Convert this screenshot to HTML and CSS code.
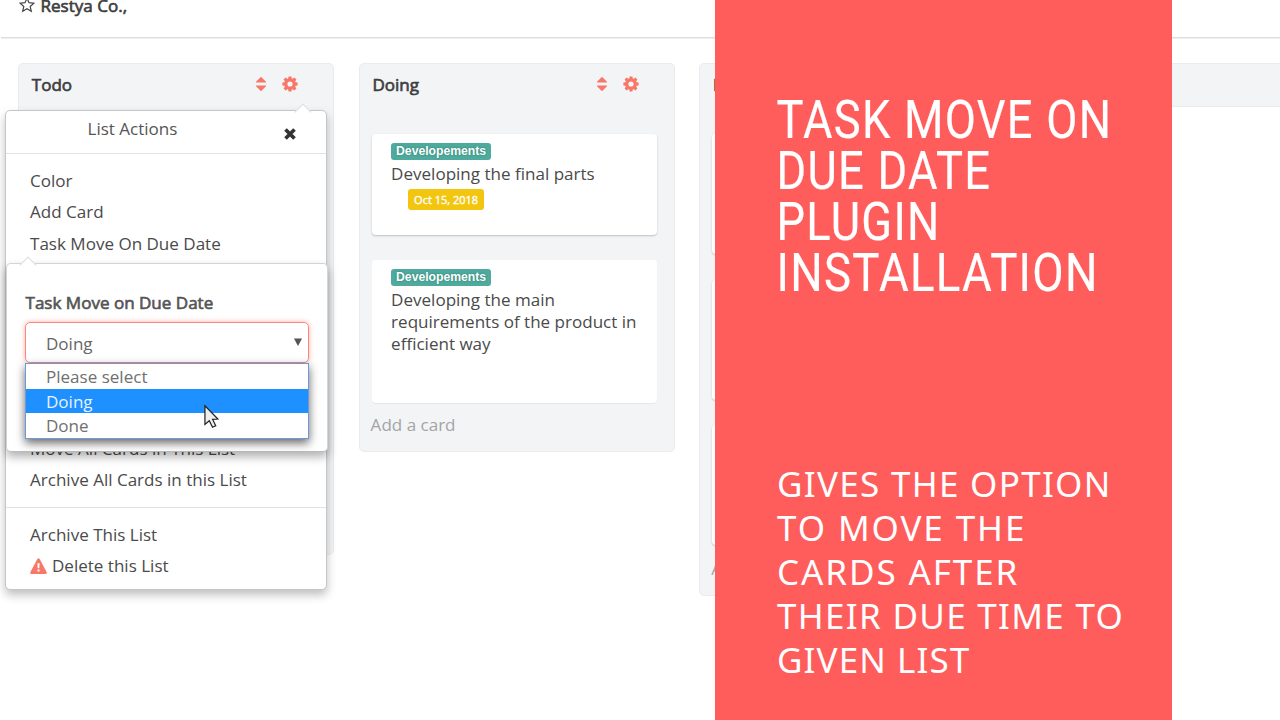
FILE: index.html
```html
<!DOCTYPE html>
<html lang="en">
<head>
<meta charset="utf-8">
<title>Task Move on Due Date</title>
<link rel="stylesheet" href="styles.css">
</head>
<body>
<svg class="defs" width="0" height="0">
  <symbol id="sort" viewBox="0 0 12 16"><path d="M1.400 6.600Q.5 6.500 1 5.700L5.500 1.200Q6 .8 6.500 1.200L11 5.700Q11.500 6.500 10.600 6.600ZM1.400 9.400Q.5 9.500 1 10.300L5.500 14.800Q6 15.200 6.500 14.800L11 10.300Q11.500 9.500 10.600 9.400Z"/></symbol>
  <symbol id="gear" viewBox="0 0 16 16"><path fill-rule="evenodd" d="M6.600.4h2.800l.4 2 .9.400 1.700-1.200 2 2-1.200 1.700.4.900 2 .4v2.800l-2 .4-.4.900 1.200 1.700-2 2-1.700-1.200-.9.400-.4 2H6.600l-.4-2-.9-.4-1.700 1.200-2-2 1.200-1.700-.4-.9-2-.4V6.600l2-.4.4-.9L1.600 3.600l2-2 1.700 1.200.9-.4ZM8 5.400A2.600 2.600 0 1 0 8 10.600A2.600 2.600 0 1 0 8 5.400Z"/></symbol>
</svg>
<main class="screen">
  <header class="org-bar">
    <svg class="star" viewBox="0 0 16 16"><path d="M8 1.200l2 4.500 4.900.5-3.700 3.300 1.100 4.800L8 11.800l-4.300 2.500 1.100-4.800L1.100 6.200l4.900-.5Z"/></svg>
    <span class="org-name">Restya Co.,</span>
  </header>
  <section class="board">
    <article class="list list-todo">
      <div class="list-head"><h2>Todo</h2><svg class="sort"><use href="#sort"/></svg><svg class="gear"><use href="#gear"/></svg></div>
    </article>
    <article class="list list-doing">
      <div class="list-head"><h2>Doing</h2><svg class="sort"><use href="#sort"/></svg><svg class="gear"><use href="#gear"/></svg></div>
      <div class="card card-short"><span class="label">Developements</span><p>Developing the final parts</p><span class="due">Oct 15, 2018</span></div>
      <div class="card card-tall"><span class="label">Developements</span><p>Developing the main<br>requirements of the product in<br>efficient way</p></div>
      <div class="add-card">Add a card</div>
    </article>
    <article class="list list-done">
      <div class="list-head"><h2>Done</h2></div>
      <div class="card"></div><div class="card"></div><div class="card"></div>
      <div class="add-card">Add a card</div>
    </article>
    <div class="list add-list"></div>
  </section>

  <div class="menu">
    <i class="tip"></i>
    <div class="menu-head"><span>List Actions</span>
      <svg class="close" viewBox="0 0 12 12"><path d="M1.500 1.500l9 9M10.500 1.500l-9 9"/></svg></div>
    <ul class="group first"><li>Color</li><li>Add Card</li><li>Task Move On Due Date</li></ul>
    <ul class="group second"><li>Move All Cards in This List</li><li>Archive All Cards in this List</li></ul>
    <ul class="group third"><li>Archive This List</li><li class="delete"><svg class="warn" viewBox="0 0 17 16"><path d="M7.500.8Q8.500-.4 9.500.8L16.700 14.200Q17 15.800 15.600 16H1.400Q0 15.800.3 14.200Z"/><path class="mark" d="M7.400 5.200h2.200l-.3 5.100H7.700ZM7.500 11.500h2v2h-2Z"/></svg><span>Delete this List</span></li></ul>
  </div>

  <div class="popover">
    <i class="tip"></i>
    <h3>Task Move on Due Date</h3>
    <div class="select"><span>Doing</span><svg class="arrow" viewBox="0 0 8 8"><path d="M0 .5h8L4 8Z"/></svg></div>
    <ul class="options"><li>Please select</li><li class="active">Doing</li><li>Done</li></ul>
    <svg class="cursor" viewBox="0 0 16 25"><path d="M1 1v20l4.600-4 3.500 7 3.400-1.700-3.300-6.700 5.600-.4Z"/></svg>
  </div>

  <aside class="promo">
    <h1><span>TASK MOVE ON</span><span>DUE DATE</span><span>PLUGIN</span><span class="wide">INSTALLATION</span></h1>
    <p><span class="snug">GIVES THE OPTION</span><span>TO MOVE THE</span><span>CARDS AFTER</span><span class="snug">THEIR DUE TIME TO</span><span class="tight">GIVEN LIST</span></p>
  </aside>
</main>
</body>
</html>
```
FILE: styles.css
```css
* { box-sizing: border-box; margin: 0; padding: 0; }
body { background: #fff; font-family: "Open Sans", "Noto Sans", sans-serif; font-size: 17.05px; color: #4a4a4a; }
ul { list-style: none; }
.defs { position: absolute; }
.screen { position: relative; width: 1280px; height: 720px; overflow: hidden; background: #fff; }
.org-bar { display: flex; height: 39px; margin-left: 1px; padding-left: 18px; border-bottom: 1px solid #eeefef; box-shadow: inset 0 -1px #dedfe0; gap: 5.500px; }
.star { width: 16px; height: 16px; margin-top: -3px; fill: none; stroke: #444; stroke-width: 1.2; }
.org-name { line-height: 22px; margin-top: -5px; }
.org-name, .list-head h2, .popover h3 { font-weight: 400; font-size: 17.05px; color: #3e3e3e; -webkit-text-stroke: .65px currentColor; }
.board { display: flex; align-items: flex-start; gap: 25px; width: 1400px; padding: 23.500px 0 0 18px; }
.list { width: 316px; flex: none; background: #f2f4f6; border: 1px solid #e9ebec; border-radius: 5px; padding: 0 16px 0 12px; }
.list + .list { margin-left: -.4px; }
.list-todo { height: 492px; }
.list-doing { height: 389.500px; }
.list-done { height: 533.500px; }
.add-list { height: 44px; }
.list-head { display: flex; align-items: center; height: 41px; }
.list-head h2 { flex: 1; padding-left: .8px; }
.sort { width: 12px; height: 16px; margin-right: 15px; fill: #f77768; }
.gear { width: 16px; height: 16px; margin-right: 19px; fill: #f77768; }
.card { background: #fff; border-radius: 4px; width: 285px; box-shadow: 0 1px 2px rgba(0,0,0,.22); padding: 9px 19.500px 0; }
.list-doing .list-head + .card, .list-done .list-head + .card { margin-top: 29.500px; }
.card-short { height: 101px; }
.card-tall { height: 142.500px; margin-top: 25px; box-shadow: 0 1px 1px rgba(0,0,0,.06); }
.card p { line-height: 22px; margin-top: 3px; white-space: nowrap; }
.label { display: block; width: 100px; height: 17px; border-radius: 3px; background: #4faa9e; color: #fff; font: bold 12.200px/16px "Liberation Sans", sans-serif; text-align: center; text-shadow: 0 0 2px #276; }
.due { display: block; width: 76px; height: 21px; margin: 4px 0 0 17px; border-radius: 3px; background: #f2c60f; color: #fff; font-size: 11px; font-weight: 400; -webkit-text-stroke: .35px #fff; line-height: 21px; text-align: center; white-space: nowrap; }
.add-card { color: #a4a4a4; line-height: 22px; margin: 11.500px 0 0 -1px; }
.list-done .card { height: 120px; }
.list-done .card + .card { margin-top: 25.500px; }
.list-done .add-card { margin-top: 13px; }
.menu, .popover { position: absolute; background: #fff; border: 1px solid #c4c6c8; border-radius: 5px; box-shadow: 0 5px 10px rgba(0,0,0,.25); }
.menu { left: 5px; top: 110px; width: 322px; height: 480px; }
.tip { position: absolute; width: 12px; height: 12px; background: #fff; border: 1px solid #dcdedf; border-right: 0; border-bottom: 0; transform: rotate(45deg); }
.menu > .tip { left: 291px; top: -5px; }
.menu-head { position: relative; display: flex; justify-content: space-between; height: 43px; padding: 6px 30px 0 81.500px; border-bottom: 1px solid #e2e2e2; line-height: 24px; color: #555; }
.close { width: 12px; height: 12px; margin-top: 11px; stroke: #333; stroke-width: 3.700; }
.group { padding: 10.500px 24px; line-height: 31.600px; white-space: nowrap; }
.first { height: 156px; }
.second { height: 198px; padding-top: 121.500px; border-top: 1px solid #e2e2e2; border-bottom: 1px solid #e2e2e2; }
.delete { display: flex; align-items: center; gap: 5px; }
.warn { width: 17px; height: 16px; fill: #f77768; }
.mark { fill: #fff; }
.popover { left: 6px; top: 263px; width: 321.500px; height: 189px; padding: 28px 18px 0; border-color: #d2d4d6; border-bottom-color: #bbb; box-shadow: 0 5px 10px rgba(0,0,0,.3); }
.popover > .tip { left: 15px; top: -5px; }
.popover h3 { line-height: 22px; padding-left: .5px; color: #555; white-space: nowrap; }
.select { display: flex; justify-content: space-between; align-items: center; height: 41px; margin-top: 8px; padding: 2px 6px 0 20px; border: 1.500px solid #f58a7d; border-radius: 5px; box-shadow: 0 0 5px rgba(247,119,104,.6); line-height: 41px; color: #666; }
.arrow { width: 8px; height: 8px; fill: #555; margin-top: -3px; }
.options { position: relative; border: 1px solid #6e98d8; background: #fff; height: 76px; line-height: 25.500px; color: #707070; box-shadow: 0 4px 9px rgba(0,0,0,.6); }
.options li { height: 24.500px; padding-left: 20px; }
.options .active { background: #1e90ff; color: #e6f2ff; }
.cursor { position: absolute; left: 197px; top: 139.500px; width: 15px; height: 25px; fill: #eee; stroke: #222; stroke-width: 1.300; }
.promo { position: absolute; left: 715px; top: 0; width: 457px; height: 720px; padding: 94px 0 0 62px; background: #ff5c5c; color: #fff; }
.promo span { display: block; white-space: nowrap; transform-origin: left; }
.promo h1 { height: 368px; font: 400 54px/51px Roboto, sans-serif; letter-spacing: 1.500px; -webkit-text-stroke: .2px #fff; }
.promo h1 span { transform: translateX(-.5px) scaleX(.838); }
.promo h1 .wide { transform: translateX(-.5px) scaleX(.844); }
.promo p { font: 400 35px/44px "Noto Sans", sans-serif; letter-spacing: 1.900px; }
.promo p .snug { letter-spacing: 1.300px; }
.promo p .tight { letter-spacing: 1.100px; }
```
